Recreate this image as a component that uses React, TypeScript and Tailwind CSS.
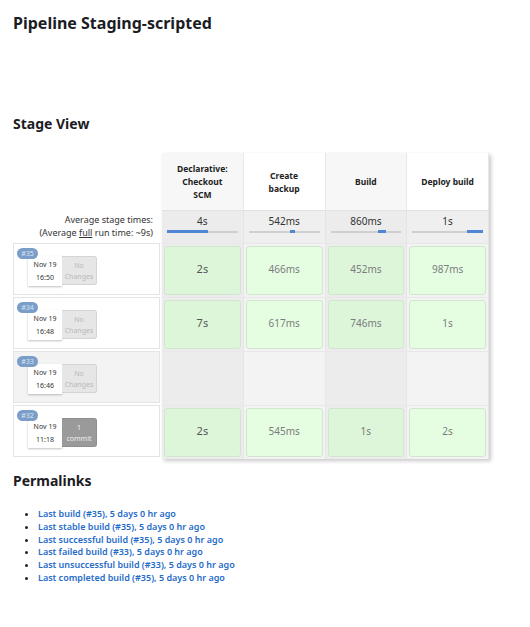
import React from "react";

type Build = {
	id: string;
	date: string;
	time: string;
	changes: string[];
	commit?: boolean;
	cells: string[] | null;
};

const stages = [
	["Declarative:", "Checkout", "SCM"],
	["Create", "backup"],
	["Build"],
	["Deploy build"],
];

const averages = [
	{ label: "4s", left: 0, width: 41 },
	{ label: "542ms", left: 41, width: 5 },
	{ label: "860ms", left: 47, width: 8 },
	{ label: "1s", left: 55, width: 16 },
];

const builds: Build[] = [
	{ id: "#35", date: "Nov 19", time: "16:50", changes: ["No", "Changes"], cells: ["2s", "466ms", "452ms", "987ms"] },
	{ id: "#34", date: "Nov 19", time: "16:48", changes: ["No", "Changes"], cells: ["7s", "617ms", "746ms", "1s"] },
	{ id: "#33", date: "Nov 19", time: "16:46", changes: ["No", "Changes"], cells: null },
	{ id: "#32", date: "Nov 19", time: "11:18", changes: ["1", "commit"], commit: true, cells: ["2s", "545ms", "1s", "2s"] },
];

const permalinks = [
	"Last build (#35), 5 days 0 hr ago",
	"Last stable build (#35), 5 days 0 hr ago",
	"Last successful build (#35), 5 days 0 hr ago",
	"Last failed build (#33), 5 days 0 hr ago",
	"Last unsuccessful build (#33), 5 days 0 hr ago",
	"Last completed build (#35), 5 days 0 hr ago",
];

function BuildInfo({ build }: { build: Build }) {
	const failed = build.cells === null;
	return (
		<div
			className={`relative h-[52px] mb-[2px] border border-[#e4e4e4] ${failed ? "bg-[#f3f3f3]" : "bg-white"}`}
		>
			<span className="absolute left-[3px] top-[4px] z-10 h-[11px] w-[21px] rounded-full bg-[#7a9ec9] text-[7px] leading-[11px] text-center text-[#dbe5f1]">
				{build.id}
			</span>
			<div className="absolute left-[14px] top-[12px] flex">
				<div className="flex h-[30px] w-[34px] flex-col items-center justify-between bg-white py-[4px] text-[7px] leading-[9px] text-[#333] shadow-[0_1px_2px_rgba(0,0,0,0.25)]">
					<span>{build.date}</span>
					<span>{build.time}</span>
				</div>
				<div
					className={`flex h-[29px] w-[35px] flex-col items-center justify-center gap-[2px] rounded-r-[3px] border border-l-0 text-[7px] leading-[9px] ${
						build.commit
							? "bg-[#9a9a9a] border-[#8e8e8e] text-[#eeeeee]"
							: "bg-[#e6e6e6] border-[#d4d4d4] text-[#b9b9b9]"
					}`}
				>
					{build.changes.map((c) => (
						<span key={c}>{c}</span>
					))}
				</div>
			</div>
		</div>
	);
}

export default function App() {
	return (
		<div className="font-['Noto_Sans',sans-serif] px-[13px] pt-[11px] pb-10 text-[#1c1c24]">
			<h1 className="text-[16px] font-bold leading-6">Pipeline Staging-scripted</h1>

			<h2 className="mt-[79px] text-[14px] font-bold leading-5">Stage View</h2>

			<div className="mt-[19px] flex">
				<div className="w-[149px] pr-[2px]">
					<div className="h-[57px]" />
					<div className="flex h-[33px] flex-col items-end justify-center pr-[7px] pb-[1px] text-[9px] leading-[13px] text-[#333]">
						<span>Average stage times:</span>
						<span>
							(Average <span className="underline">full</span> run time: ~9s)
						</span>
					</div>
					{builds.map((b) => (
						<BuildInfo key={b.id} build={b} />
					))}
				</div>

				<div className="w-[327px] shadow-[2px_2px_4px_rgba(0,0,0,0.22)]">
					<div className="flex h-[57px]">
						{stages.map((lines, i) => (
							<div
								key={i}
								className={`flex w-[81.75px] flex-col items-center justify-center border-r border-[#e8e8e8] text-[8.5px] font-bold leading-[13px] text-[#222] ${
									i % 2 === 0 ? "bg-[#f7f7f7]" : "bg-white"
								}`}
							>
								{lines.map((l) => (
									<span key={l}>{l}</span>
								))}
							</div>
						))}
					</div>
					<div className="flex h-[33px] border-t border-[#e2e2e2]">
						{averages.map((a, i) => (
							<div
								key={i}
								className={`flex w-[81.75px] flex-col items-center border-r border-[#e4e4e4] px-[5px] pt-[3px] ${
									i % 2 === 0 ? "bg-[#ececec]" : "bg-[#efefef]"
								}`}
							>
								<span className="text-[10px] leading-[14px] text-[#333]">{a.label}</span>
								<div className="relative mt-[2px] h-[3px] w-full">
									<div className="absolute left-0 right-0 top-[1px] h-[2px] bg-[#cfcfcf]" />
									<div
										className="absolute top-0 h-[3px] bg-[#4f87d4]"
										style={{ left: a.left, width: a.width }}
									/>
								</div>
							</div>
						))}
					</div>
					{builds.map((b) => (
						<div key={b.id} className="flex h-[54px] border-t border-[#e8e8e8]">
							{[0, 1, 2, 3].map((i) => (
								<div
									key={i}
									className={`w-[81.75px] border-r border-[#e6e6e6] p-[2px] ${
										i % 2 === 0 ? "bg-[#ececec]" : "bg-[#f3f3f3]"
									}`}
								>
									{b.cells && (
										<div
											className={`flex h-full items-center justify-center pb-[3px] rounded-[3px] border border-[#d2e6cf] ${
												i % 2 === 0 ? "bg-[#ddf6da]" : "bg-[#e5fee2]"
											} ${i === 0 ? "text-[11px] text-[#555]" : "text-[10px] text-[#7c7c7c]"}`}
										>
											{b.cells[i]}
										</div>
									)}
								</div>
							))}
						</div>
					))}
				</div>
			</div>

			<h2 className="mt-[12px] text-[14px] font-bold leading-5">Permalinks</h2>
			<ul className="mt-[17px] list-disc pl-[25px] text-[9px] font-semibold leading-[12.8px] text-[#1f6bc9]">
				{permalinks.map((p) => (
					<li key={p} className="marker:text-[#222]">
						<a href="#">{p}</a>
					</li>
				))}
			</ul>
		</div>
	);
}
